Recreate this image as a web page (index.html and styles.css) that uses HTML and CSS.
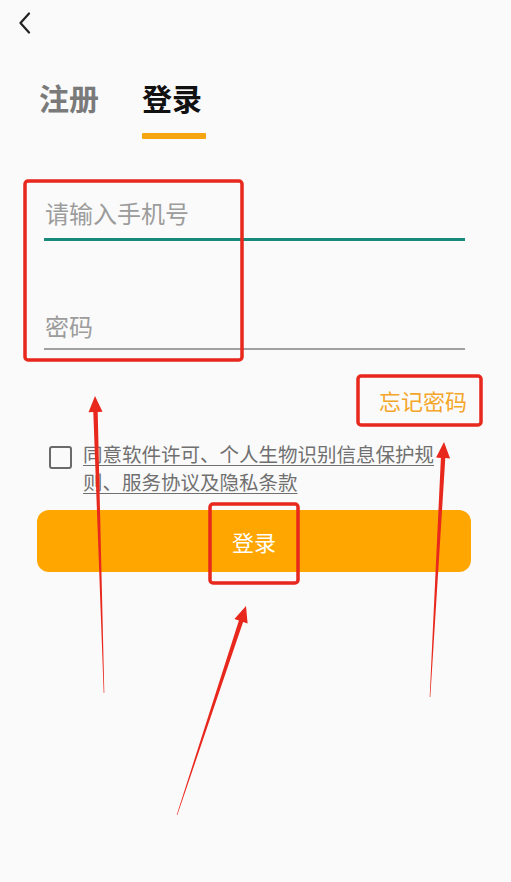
FILE: index.html
```html
<!DOCTYPE html>
<html lang="zh-CN">
<head>
    <meta charset="UTF-8">
    <meta name="viewport" content="width=device-width, initial-scale=1.0">
    <title>登录</title>
    <link rel="stylesheet" href="styles.css">
</head>
<body>
    <div class="page">
        <!-- Top bar -->
        <div class="topbar">
            <svg class="back" width="14" height="22" viewBox="0 0 14 22">
                <path d="M11 1.5 L2.5 11 L11 20.5" fill="none" stroke="#222" stroke-width="2.2" stroke-linecap="round" stroke-linejoin="round"/>
            </svg>
        </div>

        <!-- Tabs -->
        <div class="tabs">
            <div class="tab">注册</div>
            <div class="tab active">登录</div>
        </div>

        <!-- Form -->
        <div class="form">
            <div class="field focused">请输入手机号</div>
            <div class="field second">密码</div>
        </div>

        <div class="forgot-row">
            <span class="forgot">忘记密码</span>
        </div>

        <div class="agree">
            <span class="checkbox"></span>
            <span class="agree-text">同意软件许可、个人生物识别信息保护规则、服务协议及隐私条款</span>
        </div>

        <button class="login-btn">登录</button>
    </div>

    <!-- Annotations -->
    <svg class="marks" width="511" height="882" viewBox="0 0 511 882">
        <g fill="none" stroke="#e8271d" stroke-width="3.5">
            <rect x="25" y="181" width="217" height="179" rx="3"/>
            <rect x="358" y="376" width="123" height="49" rx="3"/>
            <rect x="210" y="504" width="88" height="79" rx="3"/>
        </g>
        <g fill="#e8271d">
            <polygon points="104.3,693 97.7,411.9 102.5,411.8 95,396 88.5,412.2 93.3,412.1 103.7,693"/>
            <polygon points="430.3,697 445.3,458.1 450.1,458.4 444,442 436.1,457.6 440.9,457.9 429.7,697"/>
            <polygon points="177.3,815.1 243.1,621.9 247.6,623.4 246,606 234.4,619 238.9,620.5 176.7,814.9"/>
        </g>
    </svg>
</body>
</html>
```

FILE: styles.css
```css
/* Base */
* {
    margin: 0;
    padding: 0;
    box-sizing: border-box;
}
body {
    width: 511px;
    height: 882px;
    background-color: #fafafa;
    font-family: "Noto Sans CJK SC", "Noto Sans", sans-serif;
    position: relative;
    overflow: hidden;
}
.page {
    display: flex;
    flex-direction: column;
}
/* Top bar */
.topbar {
    padding: 12px 0 0 18px;
    height: 34px;
}
.back {
    display: block;
}
/* Tabs */
.tabs {
    display: flex;
    gap: 43px;
    padding-left: 39px;
    margin-top: 48px;
}
.tab {
    font-size: 30px;
    line-height: 30px;
    font-weight: bold;
    color: #7a7a7a;
    display: flex;
    flex-direction: column;
}
.tab.active {
    color: #111;
}
.tab.active::after {
    content: "";
    display: block;
    width: 64px;
    height: 6px;
    margin-top: 21px;
    border-radius: 1px;
    background-color: #f5a510;
}
/* Form */
.form {
    margin: 62px 46px 0 44px;
}
.field {
    font-size: 24px;
    line-height: 24px;
    color: #9c9c9c;
    padding: 0 0 13px 1px;
    border-bottom: 2px solid #a0a0a0;
}
.field.focused {
    border-bottom: 3px solid #178a7c;
}
.field.second {
    margin-top: 73px;
    padding-bottom: 10px;
}
/* Forgot password */
.forgot-row {
    display: flex;
    justify-content: flex-end;
    padding-right: 44px;
    margin-top: 37px;
}
.forgot {
    font-size: 22px;
    line-height: 26px;
    color: #f4a62a;
}
/* Agreement */
.agree {
    display: flex;
    align-items: flex-start;
    gap: 11px;
    padding-left: 49px;
    margin-top: 27px;
}
.checkbox {
    flex: none;
    width: 23px;
    height: 23px;
    margin-top: 6px;
    border: 2.5px solid #6a6a6a;
    border-radius: 3px;
}
.agree-text {
    width: 360px;
    font-size: 19.5px;
    line-height: 28px;
    color: #707070;
    text-decoration: underline;
    text-underline-offset: 3px;
}
/* Login button */
.login-btn {
    margin: 14px 0 0 37px;
    width: 434px;
    height: 62px;
    border: none;
    border-radius: 12px;
    background-color: #ffa600;
    color: #fff;
    font-family: "Noto Sans CJK SC", sans-serif;
    font-size: 22px;
}
/* Annotation layer */
.marks {
    position: absolute;
    top: 0;
    left: 0;
    pointer-events: none;
}
```
